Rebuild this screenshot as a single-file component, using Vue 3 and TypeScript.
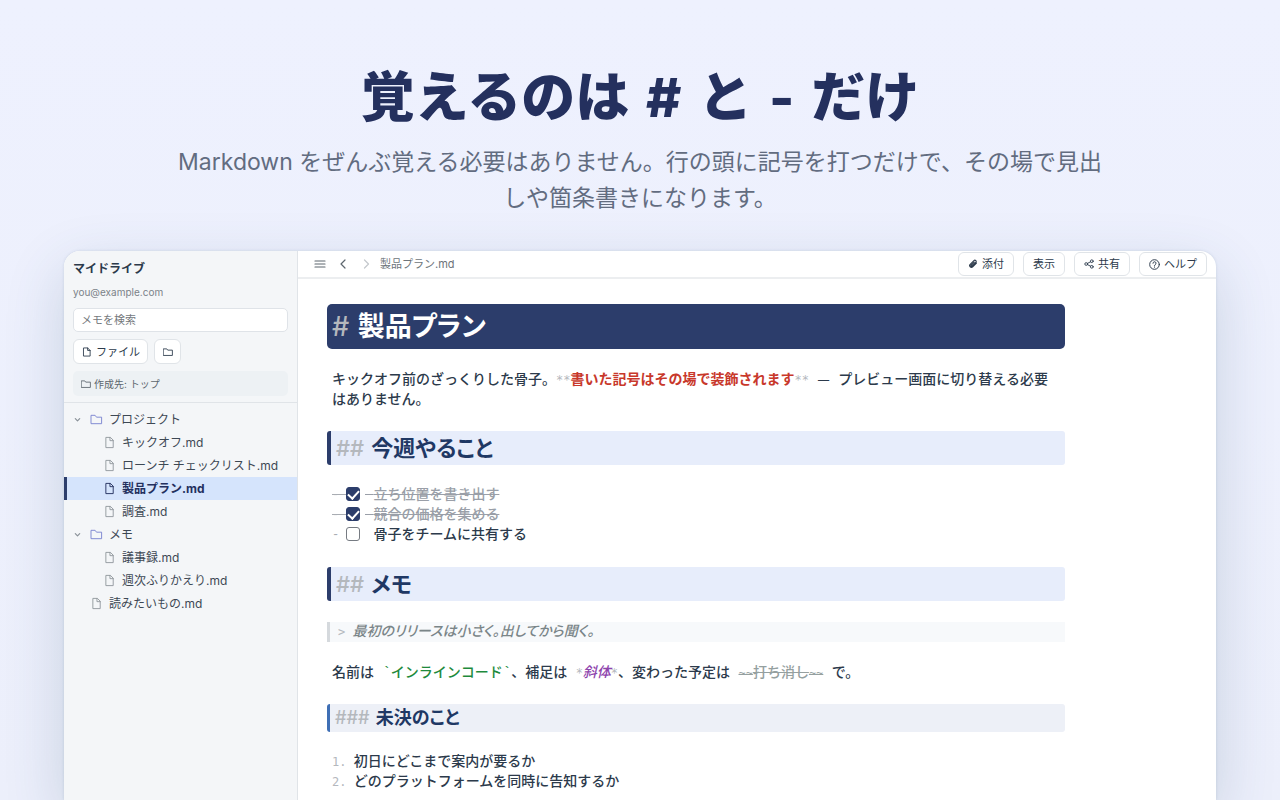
<script setup lang="ts">
import { ref } from 'vue'

interface TreeItem {
  name: string
  kind: 'folder' | 'file'
  depth: number
  active?: boolean
}

interface Task {
  text: string
  done: boolean
}

const tree: TreeItem[] = [
  { name: 'プロジェクト', kind: 'folder', depth: 0 },
  { name: 'キックオフ.md', kind: 'file', depth: 1 },
  { name: 'ローンチ チェックリスト.md', kind: 'file', depth: 1 },
  { name: '製品プラン.md', kind: 'file', depth: 1, active: true },
  { name: '調査.md', kind: 'file', depth: 1 },
  { name: 'メモ', kind: 'folder', depth: 0 },
  { name: '議事録.md', kind: 'file', depth: 1 },
  { name: '週次ふりかえり.md', kind: 'file', depth: 1 },
  { name: '読みたいもの.md', kind: 'file', depth: 0 },
]

const tasks = ref<Task[]>([
  { text: '立ち位置を書き出す', done: true },
  { text: '競合の価格を集める', done: true },
  { text: '骨子をチームに共有する', done: false },
])

const questions: string[] = [
  '初日にどこまで案内が要るか',
  'どのプラットフォームを同時に告知するか',
]

const query = ref('')
</script>

<template>
  <main class="page">
    <header class="hero">
      <h1>覚えるのは <span class="key">#</span> と <span class="key">-</span> だけ</h1>
      <p>Markdown をぜんぶ覚える必要はありません。行の頭に記号を打つだけで、その場で見出しや箇条書きになります。</p>
    </header>

    <section class="window">
      <aside class="sidebar">
        <div class="side-head">
          <strong class="drive">マイドライブ</strong>
          <span class="email">you@example.com</span>
          <input v-model="query" class="search" type="search" placeholder="メモを検索" aria-label="メモを検索" />
          <div class="actions">
            <button type="button" class="btn">
              <svg class="ico" viewBox="0 0 16 16"><path d="M3 1.500h6L13 5.500V14.500H3zM9 1.500v4h4" /></svg>
              ファイル
            </button>
            <button type="button" class="btn" aria-label="フォルダ">
              <svg class="ico" viewBox="0 0 16 16"><path d="M1 3h5l1.500 2h7.500v8.500H1z" /></svg>
            </button>
          </div>
          <div class="target">
            <svg class="ico" viewBox="0 0 16 16"><path d="M1 3h5l1.500 2h7.500v8.500H1z" /></svg>
            作成先: トップ
          </div>
        </div>
        <nav class="tree">
          <a
            v-for="item in tree"
            :key="item.name"
            href="#"
            class="row"
            :class="[item.kind, { nested: item.depth === 1, active: item.active }]"
          >
            <svg v-if="item.kind === 'folder'" class="caret" viewBox="0 0 8 8"><path d="M1.500 3l2.500 2.500L6.500 3" /></svg>
            <svg v-if="item.kind === 'folder'" class="glyph" viewBox="0 0 14 14"><path d="M1.500 2.500h4l1.500 2h5.500v7h-11z" /></svg>
            <svg v-else class="glyph" viewBox="0 0 14 14"><path d="M3.500 1.500h4.500l3 3v8h-7.500zM7.500 1.500v3.500h3.500" /></svg>
            <span>{{ item.name }}</span>
          </a>
        </nav>
      </aside>

      <div class="main">
        <div class="toolbar">
          <button type="button" class="plain" aria-label="メニュー">
            <svg viewBox="0 0 12 12"><path d="M1 3h10M1 6h10M1 9h10" /></svg>
          </button>
          <button type="button" class="plain" aria-label="戻る">
            <svg viewBox="0 0 12 12"><path d="M8 2L4 6l4 4" /></svg>
          </button>
          <button type="button" class="plain faded" aria-label="進む" disabled>
            <svg viewBox="0 0 12 12"><path d="M4.500 2l4 4-4 4" /></svg>
          </button>
          <span class="crumb">製品プラン.md</span>
          <div class="tools">
            <button type="button" class="btn">
              <svg class="ico clip" viewBox="0 0 16 16"><path d="M13.500 6.500l-6 6a2.800 2.800 0 0 1-4-4l6-6a2 2 0 0 1 3 3l-6 6a1 1 0 0 1-1.500-1.500l5-5" /></svg>
              添付
            </button>
            <button type="button" class="btn">表示</button>
            <button type="button" class="btn">
              <svg class="ico" viewBox="0 0 16 16"><circle cx="3.500" cy="8" r="2.200" /><circle cx="12.500" cy="3.500" r="2.200" /><circle cx="12.500" cy="12.500" r="2.200" /><path d="M5.500 7l5-2.500M5.500 9l5 2.500" /></svg>
              共有
            </button>
            <button type="button" class="btn">
              <svg class="ico help" viewBox="0 0 16 16"><circle cx="8" cy="8" r="7" /><path d="M5.800 6.200a2.200 2.200 0 1 1 3.200 2q-1 .5-1 1.500M8 11.500v.5" /></svg>
              ヘルプ
            </button>
          </div>
        </div>

        <article class="doc">
          <h2 class="h1"><span class="mark">#</span> 製品プラン</h2>
          <p>キックオフ前のざっくりした骨子。<span class="mark">**</span><strong>書いた記号はその場で装飾されます</strong><span class="mark">**</span> <span class="dash">—</span> プレビュー画面に切り替える必要はありません。</p>

          <h3 class="h2"><span class="mark">##</span> 今週やること</h3>
          <ul class="tasks">
            <li v-for="task in tasks" :key="task.text">
              <label :class="{ done: task.done }">
                <span class="bullet">- </span><input v-model="task.done" type="checkbox" /><span class="label"><span class="gap">&nbsp;</span>{{ task.text }}</span>
              </label>
            </li>
          </ul>

          <h3 class="h2"><span class="mark">##</span> メモ</h3>
          <blockquote><span class="mark">&gt; </span>最初のリリースは小さく。出してから聞く。</blockquote>
          <p>名前は <code>`インラインコード`</code>、補足は <em><span class="mark">*</span>斜体<span class="mark">*</span></em>、変わった予定は <del><span class="tilde">~~</span>打ち消し<span class="tilde">~~</span></del> で。</p>

          <h4 class="h3"><span class="mark">###</span> 未決のこと</h4>
          <ol class="questions">
            <li v-for="(question, index) in questions" :key="question">
              <span class="mark">{{ index + 1 }}. </span>{{ question }}
            </li>
          </ol>
        </article>
      </div>
    </section>
  </main>
</template>

<style>
body {
  margin: 0;
}
</style>

<style scoped>
* {
  box-sizing: border-box;
}

.page {
  display: flex;
  flex-direction: column;
  height: 100vh;
  overflow: hidden;
  background: linear-gradient(180deg, #eef1fe, #eceffb);
  font-family: Inter, "Noto Sans CJK JP", sans-serif;
  color: #2c3a4b;
}

.hero {
  flex: none;
  padding: 62px 24px 35px;
  text-align: center;
}

.hero h1 {
  margin: 0;
  font-size: 54px;
  line-height: 72px;
  font-weight: 800;
  color: #24305e;
}

.key {
  padding: 0 5px;
}

.hero p {
  max-width: 940px;
  margin: 10px auto 0;
  font-size: 23px;
  line-height: 36px;
  color: #626c80;
}

.window {
  display: flex;
  flex: 1;
  width: 90%;
  min-height: 0;
  margin: 0 auto;
  overflow: hidden;
  border-radius: 16px 16px 0 0;
  background: #fff;
  box-shadow: 0 0 3px rgba(50, 80, 110, 0.15), 0 20px 60px rgba(50, 85, 115, 0.2);
}

.sidebar {
  flex: none;
  width: 234px;
  border-right: 1px solid #e0e4e8;
  background: #f4f6f8;
}

.side-head {
  display: flex;
  flex-direction: column;
  padding: 8px 9px 6px;
  border-bottom: 1px solid #e0e4e8;
}

.drive {
  font-size: 12px;
  line-height: 20px;
}

.email {
  margin-top: 3px;
  font-size: 10px;
  line-height: 20px;
  color: #7b8288;
}

.search {
  height: 24px;
  margin-top: 6px;
  padding: 0 7px;
  border: 1px solid #dfe3e8;
  border-radius: 5px;
  background: #fff;
  font: inherit;
  font-size: 11px;
  color: inherit;
}

.search::placeholder {
  color: #75797d;
  opacity: 1;
}

.actions {
  display: flex;
  gap: 6px;
  margin-top: 7px;
}

.btn {
  display: inline-flex;
  align-items: center;
  gap: 4px;
  height: 25px;
  padding: 0 8px;
  border: 1px solid #e0e4e8;
  border-radius: 6px;
  background: #fff;
  color: #2c3a4b;
  font: inherit;
  font-size: 11px;
  line-height: 16px;
  white-space: nowrap;
}

.actions .btn {
  padding: 0 7px 0 8px;
}

svg {
  flex: none;
  fill: none;
  stroke: currentColor;
  stroke-width: 1.4;
  stroke-linecap: round;
  stroke-linejoin: round;
}

.ico {
  width: 10px;
  height: 10px;
}

.target {
  display: flex;
  align-items: center;
  gap: 3px;
  height: 25px;
  margin-top: 7px;
  padding: 0 8px;
  border-radius: 5px;
  background: #edf1f4;
  font-size: 10px;
  line-height: 14px;
  color: #5d666e;
}

.tree {
  display: flex;
  flex-direction: column;
  padding-top: 5px;
}

.row {
  display: flex;
  align-items: center;
  gap: 6px;
  height: 23px;
  padding-left: 26px;
  color: #3d4854;
  font-size: 12px;
  line-height: 18px;
  text-decoration: none;
  white-space: nowrap;
}

.row.folder {
  padding-left: 10px;
}

.row.nested {
  padding-left: 39px;
}

.row.active {
  background: #d5e4fc;
  box-shadow: inset 3px 0 #2c3d6b;
  color: #24305e;
  font-weight: 700;
}

.caret {
  width: 7px;
  height: 7px;
  margin-right: 3px;
  color: #8a9299;
}

.glyph {
  width: 13px;
  height: 13px;
  stroke-width: 1;
  color: #92989e;
}

.folder .glyph {
  color: #7a84cf;
}

.active .glyph {
  color: #24305e;
}

.main {
  flex: 1;
  min-width: 0;
}

.toolbar {
  display: flex;
  align-items: center;
  height: 28px;
  padding: 0 9px 0 16px;
  border-bottom: 2px solid #eceef0;
}

.plain {
  display: flex;
  margin-right: 11px;
  padding: 0;
  border: 0;
  background: none;
  color: #5d666e;
}

.plain svg {
  width: 12px;
  height: 12px;
  stroke-width: 1.2;
}

.plain.faded {
  margin-right: 8px;
  color: #c4c8cc;
}

.crumb {
  font-size: 11px;
  line-height: 16px;
  color: #6d747a;
}

.tools {
  display: flex;
  gap: 9px;
  margin-left: auto;
}

.tools .btn {
  height: 24px;
  padding: 0 9px;
}

.ico.help {
  width: 11px;
  height: 11px;
}

.ico.clip {
  stroke-width: 1.8;
}

.doc {
  max-width: 767px;
  padding: 25px 0 0 29px;
  font-family: "Liberation Mono", "Noto Sans CJK JP", monospace;
  font-size: 14px;
  line-height: 20px;
  font-weight: 500;
}

.doc p {
  margin: 21px 5px;
}

.mark {
  font-family: "DejaVu Sans Mono", monospace;
  font-size: 12px;
  line-height: 1;
  font-weight: 400;
  color: #b4b8bd;
}

.h1,
.h2,
.h3 {
  margin: 0;
  font-family: Inter, "Noto Sans CJK JP", sans-serif;
  font-feature-settings: "palt";
  font-weight: 700;
  color: #1f3864;
}

.h1 .mark,
.h2 .mark,
.h3 .mark {
  padding-right: 2px;
  font-family: inherit;
  font-size: inherit;
  font-weight: 500;
}

.h1 {
  padding: 0 5px;
  border-radius: 5px;
  background: #2c3d6b;
  color: #fff;
  font-size: 27px;
  line-height: 45px;
}

.h2 {
  padding: 0 5px;
  border-left: 4px solid #2c3d6b;
  border-radius: 3px;
  background: #e7edfb;
  font-size: 22px;
  line-height: 34px;
}

.h3 {
  padding: 0 5px;
  border-left: 3px solid #3f6fb5;
  border-radius: 3px;
  background: #edf0f7;
  font-size: 18px;
  line-height: 28px;
}

.doc strong {
  color: #c8382b;
}

.dash {
  font-family: "Noto Sans CJK JP", sans-serif;
  line-height: 1;
}

.tasks,
.questions {
  margin: 20px 5px 22px;
  padding: 0;
  list-style: none;
}

.tasks label {
  display: flex;
  align-items: center;
  height: 20px;
}

.bullet {
  width: 14px;
  white-space: pre;
  font-size: 12px;
  color: #a9adb3;
}

.tasks input {
  display: grid;
  appearance: none;
  flex: none;
  place-items: center;
  width: 14px;
  height: 14px;
  margin: 0 5px 2px 0;
  border: 1px solid #767b82;
  border-radius: 3px;
  background: #fff;
}

.tasks input:checked {
  border-color: #2c3d6b;
  background: #2c3d6b;
}

.tasks input:checked::after {
  width: 5px;
  height: 9px;
  margin-bottom: 2px;
  border: solid #fff;
  border-width: 0 2px 2px 0;
  transform: rotate(42deg);
  content: "";
}

.done {
  color: #9a9fa8;
}

.done .bullet,
.done .label {
  text-decoration: line-through;
}

blockquote {
  margin: 21px 0;
  padding: 0 8px;
  border-left: 3px solid #d5d9dd;
  background: #f7f9fb;
  font-feature-settings: "palt";
  font-style: italic;
  color: #7a8588;
}

blockquote .mark {
  font-style: normal;
}

code {
  font: inherit;
  color: #1e8a3c;
}

em {
  color: #8e44ad;
}

del {
  color: #95a0a0;
}

.tilde {
  font-size: 12px;
  line-height: 1;
}

.questions .mark {
  white-space: pre;
}
</style>
